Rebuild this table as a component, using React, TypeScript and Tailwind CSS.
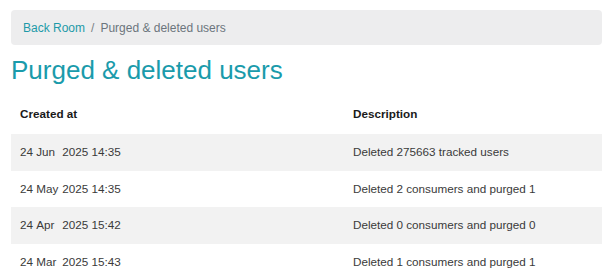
import React from "react";

const rows = [
  { d: "24", m: "Jun", rest: "2025 14:35", desc: "Deleted 275663 tracked users" },
  { d: "24", m: "May", rest: "2025 14:35", desc: "Deleted 2 consumers and purged 1" },
  { d: "24", m: "Apr", rest: "2025 15:42", desc: "Deleted 0 consumers and purged 0" },
  { d: "24", m: "Mar", rest: "2025 15:43", desc: "Deleted 1 consumers and purged 1" },
];

export default function App() {
  return (
    <div
      className="w-[603px] h-[271px] overflow-hidden bg-white pl-[11px] pr-[1px] pt-[10px]"
      style={{ fontFamily: '"Liberation Sans", Arial, sans-serif' }}
    >
      <nav className="h-[35px] rounded-[4px] bg-[#ededee] flex items-center px-[12px] text-[12px] text-[#6c757d]">
        <span className="text-[#1d9aa8]">Back Room</span>
        <span className="px-[6px] text-[#7a7f85]">/</span>
        <span>Purged &amp; deleted users</span>
      </nav>
      <h1 className="mt-[8px] text-[26px] leading-[34px] text-[#1a9bab] font-normal">
        Purged &amp; deleted users
      </h1>
      <table className="mt-[7px] w-full border-collapse text-[11.7px]">
        <thead>
          <tr className="h-[40px]">
            <th className="w-[333px] pl-[9px] text-left font-bold text-[#1a1a1a] align-middle">Created at</th>
            <th className="pl-[9px] text-left font-bold text-[#1a1a1a] align-middle">Description</th>
          </tr>
        </thead>
        <tbody>
          {rows.map((r, i) => (
            <tr key={i} className={i % 2 === 0 ? "h-[36.5px] bg-[#f2f2f2]" : "h-[36.5px] bg-white"}>
              <td className="pl-[9px] text-[#3a3a3a] align-middle whitespace-nowrap">
                {r.d}{" "}
                <span className="inline-block w-[26px]">{r.m}</span>
                {r.rest}
              </td>
              <td className="pl-[9px] text-[#3a3a3a] align-middle whitespace-nowrap">{r.desc}</td>
            </tr>
          ))}
        </tbody>
      </table>
    </div>
  );
}
